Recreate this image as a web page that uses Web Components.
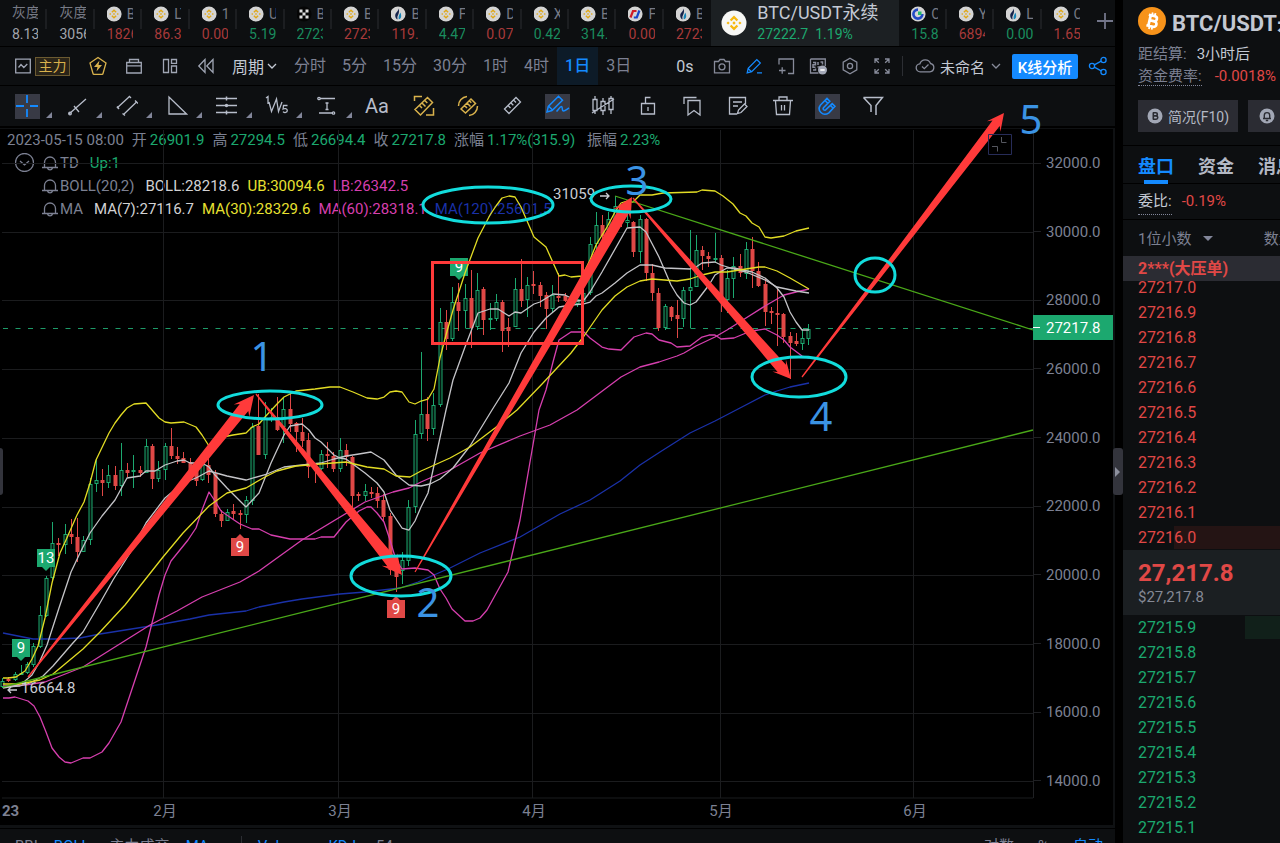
<!DOCTYPE html>
<html lang="zh-CN">
<head>
<meta charset="utf-8">
<title>BTC/USDT永续</title>
<style>
:root{
  --panel:#0d0f11;--line:#000;--muted:#7c8092;--text:#c3c9d4;--up:#1ca86f;--down:#e04846;--blue:#148aff;
  --gold:#d9b24c;--cell:#383a45;
}
html,body{height:100%}
body{margin:0;background:#000;color:var(--text);font-family:Roboto,"Noto Sans CJK SC",sans-serif;overflow:hidden}
</style>
</head>
<body>
<trade-app></trade-app>
<script>
const RESET = `*{box-sizing:border-box}
button,select,input{font:inherit;color:inherit;background:none;border:0;margin:0;padding:0;cursor:pointer}
table{border-collapse:collapse;border-spacing:0}h1,p,dl,dd,dt{margin:0;font-weight:inherit;font-size:inherit}`;

class BaseElement extends HTMLElement {
  constructor(){ super(); this.attachShadow({mode:'open'}); }
  connectedCallback(){
    this.shadowRoot.innerHTML = `<style>${RESET}${this.styles()}</style>${this.markup()}`;
    this.ready();
  }
  styles(){ return ''; }
  markup(){ return ''; }
  ready(){}
}

/* ---------- icons ---------- */
const ICONS = {
  binance:[16,`<circle cx="8" cy="8" r="7.6" fill="#d4d4d4"/><g fill="#e0a818"><path d="M8 3.2l2.6 2.6-1 1L8 5.200 6.400 6.800l-1-1z"/><path d="M8 12.800l2.600-2.600-1-1L8 10.800 6.400 9.200l-1 1z"/><path d="M4.200 7l1 1-1 1-1-1zM11.800 7l1 1-1 1-1-1zM8 6.900L9.100 8 8 9.100 6.900 8z"/></g>`],
  okx:[16,`<circle cx="8" cy="8" r="7.6" fill="#050505"/><path fill="#ddd" d="M3.500 3.500h3v3h-3zM9.500 3.500h3v3h-3zM6.500 6.500h3v3h-3zM3.500 9.500h3v3h-3zM9.500 9.500h3v3h-3z"/>`],
  htx:[16,`<circle cx="8" cy="8" r="7.6" fill="#d4d4d4"/><path fill="#14234b" d="M8.200 2.500c.5 3-3 4-3 7 0 2 1 3.500 2.300 4 .1-2-.6-2.500.6-4.600C9.400 6.500 9.300 4 8.200 2.500z"/><path fill="#1684b8" d="M10.300 6.500c-.4 2-2.200 3-1.500 6.800 1.500-.3 2.400-1.500 2.400-3.400 0-1.500-.3-2.600-.9-3.400z"/>`],
  gate:[16,`<circle cx="8" cy="8" r="7.6" fill="#d4d4d4"/><path fill="none" stroke="#2249c4" stroke-width="2.600" d="M8 3.600A4.500 4.500 0 1 0 12.400 8"/><path fill="#22b96f" d="M8 5.500h3.500V9H8z"/>`],
  bit:[16,`<circle cx="8" cy="8" r="7.6" fill="#d4d4d4"/><path fill="none" stroke="#d01c24" stroke-width="2.200" d="M3.500 11.500L6 5h3.500"/><path fill="none" stroke="#1846c8" stroke-width="2.200" d="M6.800 11.500h3L12.400 4.500"/>`],
  binanceLg:[26,`<circle cx="13" cy="13" r="12.500" fill="#f7f7f5"/><g fill="#f7b90e"><path d="M13 5.500l4.200 4.200-1.600 1.600L13 8.700l-2.600 2.600-1.600-1.600z"/><path d="M13 20.500l4.200-4.200-1.600-1.600L13 17.300l-2.600-2.600-1.600 1.600z"/><path d="M7.100 11.400L8.700 13l-1.600 1.600L5.500 13zM18.900 11.400l1.600 1.600-1.600 1.600-1.600-1.600zM13 11.300l1.700 1.700-1.700 1.700-1.700-1.700z"/></g>`],
  bitcoin:[28,`<circle cx="14" cy="14" r="14" fill="#f7931a"/><g transform="rotate(13 14 14)" fill="none" stroke="#fff" stroke-width="2.700"><path d="M9.500 8.600h6.200a2.600 2.600 0 0 1 0 5.200h-4M11.500 8.300v11.300M9.500 19.400h6.800a2.800 2.800 0 0 0 0-5.600h-4.600"/><path d="M12.800 5.500v3M15.600 5.500v3M12.800 19.500v3M15.600 19.500v3" stroke-width="1.800"/></g>`],
  wave:[18,`<path d="M1.700 2.200h14.600v13.600H1.700z"/><path d="M4.500 10.500l2.500-3 2.800 3 3.500-3.500"/>`],
  bolt:[20,`<path d="M10 1.500l8 5.500-3 10.500a1 1 0 0 1-1 .8H6a1 1 0 0 1-1-.8L2 7z"/><path fill="currentColor" stroke="none" d="M11.500 4.500L6 11h3.500l-1 4.500L14 9h-3.500z"/>`],
  brief:[18,`<path d="M1.700 5.500h14.600v10.500H1.700zM4.500 5.500V2.500h9v3M1.700 8.800h14.600"/>`],
  layout:[18,`<path d="M2.500 2.500h5v13h-5zM10.500 2.500h5v3.800h-5zM10.500 9h5v6.500h-5z"/>`],
  rewind:[18,`<path d="M8 2.500L1.800 9 8 15.500zM16 2.500L9.800 9l6.200 6.500z"/>`],
  down:[12,`<path d="M2 4l4 4 4-4"/>`],
  camera:[18,`<path d="M1.500 4.500h4l1.500-2h4l1.500 2h4v11.300h-15z"/><circle cx="9" cy="9.800" r="3"/>`],
  pencil:[18,`<path d="M2.200 15.800l1-4.600L11.800 2.600l3.500 3.500-8.600 8.600zM3 11.500l3.500 3.300M12 15.900h5"/>`],
  addbox:[18,`<path d="M2 7.500V2h14.500v14.500H11M2 13.500h6.500M5.200 10.200v6.500"/>`],
  qr:[18,`<path d="M1.500 2h14.800v7M1.500 2v14h8"/><path d="M4 5.500h2.500v2.300H4v2.400h2.500M9 5v3M11.500 5h2v2.500M4 13h2.500v-1.500M8.500 10h2v3" stroke-width="1.500"/><circle cx="13.500" cy="13" r="4.500" fill="#a4a9b8" stroke="none"/><path d="M11.300 13h4.400" stroke="#fff" stroke-width="1.600"/>`],
  hex:[18,`<path d="M9 1.200l6.800 4v7.600L9 16.800l-6.800-4V5.200z"/><circle cx="9" cy="9" r="2.600"/>`],
  full:[18,`<path d="M2 6V2h4M12 2h4v4M16 12v4h-4M6 16H2v-4M2.200 2.200l3.600 3.600M15.800 2.200l-3.600 3.600M15.800 15.800l-3.600-3.600M2.200 15.800l3.600-3.600"/>`],
  cloud:[20,`<path d="M5.500 15.800a4 4 0 0 1-.6-8A5.600 5.600 0 0 1 15.500 7.500a4.200 4.200 0 0 1-.6 8.300z"/><path d="M7 10.500l2.300 2.200 4.200-4.200"/>`],
  share:[20,`<circle cx="4" cy="10" r="2.600"/><circle cx="15.500" cy="4" r="2.600"/><circle cx="15.500" cy="16" r="2.600"/><path d="M6.300 8.800l6.900-3.600M6.300 11.200l6.900 3.600"/>`],
  cross:[24,`<path d="M12 1v8M12 15v8M1 12h8M15 12h8" stroke-width="1.800"/>`],
  trend:[22,`<path d="M3 19L20 4M8 11l5 6"/><circle cx="4" cy="18.500" r="1.300"/>`],
  channel:[22,`<path d="M1 13L13.500 1.500M7.500 19.500L20.500 7"/><path d="M1 11.500l2 2.500M13 1l2 2M6.500 18.500l2.500 2M19 5.500l3 3"/>`],
  triangle:[22,`<path d="M3 2v17h17.500z"/>`],
  levels:[22,`<path d="M0 3.500h21M0 10.500h21M0 17.500h21M10.500 1.500v4M10.500 15.500v4" stroke-width="1.500"/><circle cx="10.500" cy="10.500" r="1"/>`],
  waves:[26,`<path d="M2 5l2-1.500V11M5 9l2.500 9.500L12.500 6l2 12.500L18 9"/><path d="M23.500 12.500h-4l-.4 3.500c1.500-.8 4.200-.6 4.200 1.600 0 2-2.700 2.700-4.300 1"/>`],
  measure:[22,`<path d="M4 3.500h15M3 18h13M11 8v6.500M9.500 8h3M9.500 14.500h3"/><circle cx="3" cy="3.500" r="1.200"/><circle cx="17.500" cy="18" r="1.200"/>`],
  rulerA:[22,`<path d="M2 14.500L14.500 2.500l5 5L7.500 20zM6.500 10.500l2.500 2.500M9 8l3.500 3.500M11.800 5.500l2.500 2.500M1.500 6V1.500H9M20.500 13v7h-7.500" stroke-width="1.500"/>`],
  rulerB:[22,`<path d="M4 14L14 4l4.500 4.500L8.500 18zM7.500 10.500l2.500 2.500M10 8l3.500 3.500M12.300 5.800l2 2M1.500 11A9.500 9.500 0 0 1 10 1.500M20.500 11a9.500 9.500 0 0 1-8.500 9.500" stroke-width="1.500"/>`],
  ruler:[22,`<path d="M2.500 14L14 2.500l4.500 4.500L7 18.500zM6 10.500l2.500 2.500M8.800 7.700l2.500 2.500M11.500 5l2.500 2.500"/>`],
  draw:[26,`<path d="M2 19l1.300-5.500L13.500 3.300l4 4L7 17.500zM4 13.500l3.500 3.500M11.500 18.500c2-2 3.500-5 5-5s0 4.500 2 4.500 3-1.500 5.500-3" stroke-width="1.500"/>`],
  candles:[24,`<path d="M2 5.500h4v11H2zM4 2v3.500M4 16.500V20M10 7.500h4v9h-4zM12 4v3.500M12 16.500V21M18 4.500h4v11h-4zM20 2v2.500M20 15.500V20M1 19L23 5"/>`],
  lock:[22,`<path d="M4.500 8.500h13v10.500h-13zM8.500 8V2.500h5M11 12v4"/>`],
  marks:[22,`<path d="M2 9V2.500h12.500M6 5.500h12V20l-6-4.500L6 20z"/>`],
  note:[22,`<path d="M18.500 9V2.500h-16v16.500H10M6 7h9M6 11h5M10.500 18.500l1-3.500 6-6 2.500 2.500-6 6z"/>`],
  trash:[22,`<path d="M1 5.500h20M7 5V2h8v3M3.500 6l1 13.500h13L18.500 6M9.500 10v5.500M12.500 10v5.500"/>`],
  magnet:[22,`<path d="M3.500 10L10 3.500l2.800 2.800-6.300 6.400c-1 1.500.7 3.200 2.200 2.200l6.500-6.300 2.700 2.700-6 6.500c-6 4-12.400-2.300-8.400-7.800zM8 5.500l2.800 2.800M13.500 10.500l2.700 2.700" stroke-width="1.600"/>`],
  filter:[22,`<path d="M1.500 2.500h19l-6.500 8v9.500M1.500 2.500L9 10.500V17" stroke-width="1.500"/>`],
  bell:[18,`<path d="M1 13.500h16M3.500 13V8.500a5.500 5.500 0 0 1 11 0V13M6.500 14a2.600 2.600 0 0 0 5 0" stroke-width="1.300"/>`],
  badgeB:[16,`<circle cx="8" cy="8" r="7.500" fill="#a2a7b5" stroke="none"/><path stroke="#2b2c33" stroke-width="1.600" d="M5.800 4.800h3a1.500 1.500 0 0 1 0 3.100H6.300M5.800 11.200h3.300a1.600 1.600 0 0 0 0-3.300M6.300 4.800v6.400"/>`],
  badgeBell:[16,`<circle cx="8" cy="8" r="7.500" fill="#a2a7b5" stroke="none"/><path stroke="#2b2c33" stroke-width="1.400" d="M4 10.500h8M5.300 10V7.300a2.700 2.700 0 0 1 5.400 0V10M6.800 12.500h2.400"/>`],
  collapse:[19,`<circle cx="9.500" cy="9.500" r="9"/><path d="M5 8l4.500 4L14 8"/>`],
  plus:[18,`<path d="M9 1v16M1 9h16" stroke-width="1.800"/>`]
};
class UiIcon extends BaseElement {
  styles(){ return `:host{display:inline-flex;flex:none}svg{display:block;fill:none;stroke:currentColor;stroke-width:1.3}`; }
  markup(){
    const [n,body] = ICONS[this.getAttribute('name')];
    const s = this.getAttribute('size') || n;
    const brand = ['binance','okx','htx','gate','bit','binanceLg','bitcoin'].includes(this.getAttribute('name'));
    return `<svg width="${s}" height="${s}" viewBox="0 0 ${n} ${n}" aria-hidden="true" ${brand?'style="stroke:none"':''}>${body}</svg>`;
  }
}

/* ---------- ticker strip ---------- */
class TickerTab extends BaseElement {
  styles(){ return `
:host{display:block;flex:1 1 0;min-width:0;position:relative}
:host::after{content:"";position:absolute;right:0;top:9px;width:2px;height:20px;background:#1c1e21}
:host([last])::after{display:none}
button{display:block;width:100%;height:46px;padding:0 9px 0 12px;text-align:left;overflow:hidden}
.n,.v{display:flex;overflow:hidden;white-space:nowrap;align-items:center}
.n{height:21px;gap:5px;font-size:14px;color:#777a85;line-height:20px;padding-top:3px}
.n ui-icon{margin:0 0 0 -1px}
.plain{padding-top:0;line-height:21px}
.v{font-size:14px;line-height:20px;height:22px;color:#a2a5ac}
.g{color:#1a8c5e}.r{color:#a83a3a}`; }
  markup(){
    const i=this.getAttribute('icon');
    return `<button type="button"><span class="n ${i?'':'plain'}">${i?`<ui-icon name="${i}"></ui-icon>`:''}<slot></slot></span><span class="v ${this.getAttribute('dir')||''}">${this.getAttribute('value')}</span></button>`;
  }
}
class TickerActive extends BaseElement {
  styles(){ return `
:host{display:block;flex:0 0 188px;background:#1c2023}
button{display:flex;align-items:center;gap:10px;width:100%;height:46px;padding:0 0 0 10px;text-align:left;white-space:nowrap}
.t{display:block;font-size:18px;line-height:22px}
.v{display:flex;gap:7px;font-size:14px;line-height:20px;color:var(--up)}`; }
  markup(){ return `<button type="button"><ui-icon name="binanceLg"></ui-icon><span><span class="t">BTC/USDT永续</span><span class="v"><span>27222.7</span><span>1.19%</span></span></span></button>`; }
}
class TickerStrip extends BaseElement {
  styles(){ return `:host{display:flex;height:46px;background:var(--panel);flex:none}
.add{flex:0 0 26px;display:flex;align-items:center;justify-content:center;color:#73768a;padding:0 0 4px 6px}`; }
  markup(){
    const a=[['','灰度','8.13',''],['','灰度','30566',''],['binance','BTC','1826','r'],['binance','LTC','86.3','r'],['binance','1000','0.00','r'],['binance','UNI','5.19','g'],['okx','BTC','27232','g'],['binance','BTC','27232','r'],['htx','BTC','119.','r'],['binance','FIL','4.47','g'],['binance','DOGE','0.07','r'],['binance','XRP','0.42','g'],['binance','BNB','314.','g'],['bit','FIL','0.00','r'],['htx','BTC','27232','r']];
    const b=[['gate','CRV','15.8','g'],['binance','YFI','6894','r'],['htx','LUNA','0.00','g'],['binance','CFX','1.65','r']];
    const m=(t,last)=>`<ticker-tab ${last?'last':''} ${t[0]?`icon="${t[0]}"`:''} value="${t[2]}" dir="${t[3]}" >${t[1]}</ticker-tab>`;
    return a.map((t,i)=>m(t,i===14)).join('')+'<ticker-active></ticker-active>'+b.map((t,i)=>m(t,i===3)).join('')+'<button class="add" type="button" aria-label="添加"><ui-icon name="plus"></ui-icon></button>';
  }
}

/* ---------- period toolbar ---------- */
class PeriodBar extends BaseElement {
  styles(){ return `
:host{display:flex;align-items:center;justify-content:space-between;height:38px;background:var(--panel);color:var(--muted);font-size:16px;flex:none;white-space:nowrap}
div{display:flex;align-items:center}
button{display:flex;align-items:center;justify-content:center}
.i{color:#a0a6b5}
.main{margin:0 18px 0 3px;width:35px;height:19px;border:1px solid #6b5a31;background:#2a2418;color:var(--gold);font-size:14px;line-height:17px}
.gold{color:var(--gold)}
.lead{padding-left:14px}.lead .i{width:36px;height:38px}.lead .i.first{width:18px}
.set{margin-left:8px}
.cycle{color:var(--text);gap:2px;margin:0 8px 0 8px}
.p{padding:0 8px;height:38px;line-height:38px}
.on{background:#0d1b28;color:var(--blue);font-weight:500}
.tools .i{width:32px;height:38px;color:#878b9a}
.tools .blue{color:var(--blue)}
.sec{color:var(--text);width:42px}
.sep{width:1px;height:20px;background:#2c2e33;margin:0 12px 0 4px}
.name{gap:5px;color:var(--text);font-size:15px}.name ui-icon{color:#878b9a}
.k{margin:0 10px;width:66px;height:25px;border-radius:2px;background:var(--blue);color:#fff;font-size:15px;font-weight:500}
.share{color:var(--blue);margin-right:7px}`; }
  markup(){
    const periods=['分时','5分','15分','30分','1时','4时','1日','3日'];
    const btn=(n,l,c='')=>`<button type="button" class="i ${c}" aria-label="${l}"><ui-icon name="${n}"></ui-icon></button>`;
    return `<div class="lead">${btn('wave','指标','first')}<button type="button" class="main">主力</button>
<button type="button" class="gold" aria-label="闪电"><ui-icon name="bolt"></ui-icon></button><div class="set">${btn('brief','工具箱')}${btn('layout','布局')}${btn('rewind','回放')}</div>
<button type="button" class="cycle">周期<ui-icon name="down"></ui-icon></button>
${periods.map(p=>`<button type="button" class="p ${p==='1日'?'on':''}">${p}</button>`).join('')}</div>
<div class="tools"><button type="button" class="sec">0s</button>${btn('camera','截图')}${btn('pencil','画线','blue')}${btn('addbox','添加窗口')}${btn('qr','订单')}${btn('hex','设置')}${btn('full','全屏')}
<span class="sep"></span><button type="button" class="name"><ui-icon name="cloud"></ui-icon>未命名<ui-icon name="down"></ui-icon></button>
<button type="button" class="k">K线分析</button><button type="button" class="share" aria-label="分享"><ui-icon name="share"></ui-icon></button></div>`;
  }
}

/* ---------- drawing toolbar ---------- */
class DrawBar extends BaseElement {
  styles(){ return `
:host{display:flex;align-items:center;height:40px;background:var(--panel);color:#b7bdca;flex:none;padding-left:2px;margin:0}
button{position:relative;display:flex;align-items:center;justify-content:center;width:45px;height:40px;flex:none}
span{display:flex;align-items:center;justify-content:center}
.w{width:50px}
.w::after{content:"";position:absolute;right:0;bottom:8px;border:3px solid transparent;border-right-color:#82869a;border-bottom-color:#82869a}
.aa{width:50px;font-size:20px}
.aa+button{width:43px}
.on span{width:25px;height:25px;background:var(--cell);color:var(--blue)}
.gold{color:var(--gold)}`; }
  markup(){
    const w=[['cross','十字',1],['trend','线段'],['channel','通道'],['triangle','形状'],['levels','水平'],['waves','波浪'],['measure','测量']];
    const n=[['rulerA','量尺','gold'],['rulerB','画尺','gold'],['ruler','标尺'],['draw','画笔','on'],['candles','K线'],['lock','锁定'],['marks','书签'],['note','笔记'],['trash','删除'],['magnet','磁铁','on'],['filter','筛选']];
    return w.map(x=>`<button type="button" class="w ${x[2]?'on':''}" aria-label="${x[1]}"><span><ui-icon name="${x[0]}"></ui-icon></span></button>`).join('')
      +`<button type="button" class="aa">Aa</button>`
      +n.map(x=>`<button type="button" class="${x[2]||''}" aria-label="${x[1]}"><span><ui-icon name="${x[0]}"></ui-icon></span></button>`).join('');
  }
}

/* ---------- chart ---------- */
/* [high, low, body top, body bottom, rising] per day */
const CANDLES=`678 688 681 687 1|677 682 679 681 0|672 681 674 680 1|665 675 673 675 1|662 674 664 673 1|643 667 646 665 1|606 648 615 647 1|576 617 578 616 1|522 580 543 578 1|538 556 543 545 0|524 554 534 545 1|519 544 534 537 0|518 562 537 552 0|536 552 540 552 1|478 545 484 540 1|458 492 480 484 1|469 496 480 483 0|465 488 475 483 1|466 490 475 486 0|443 496 470 486 1|463 477 470 473 0|455 488 470 472 1|466 477 470 473 0|439 473 446 473 1|444 489 446 479 0|461 482 470 479 1|443 480 446 470 1|428 459 446 456 0|447 464 456 459 0|452 463 458 463 0|458 474 462 473 0|465 486 470 481 0|462 481 465 480 1|454 483 465 475 0|470 517 474 514 0|510 527 514 521 0|509 521 512 521 1|504 520 511 514 0|510 529 513 515 0|496 523 500 515 1|423 505 427 501 1|394 455 426 455 0|402 459 419 455 1|408 422 417 419 1|397 431 417 430 0|397 443 409 427 1|394 432 409 424 0|422 452 423 432 0|418 447 432 441 0|433 478 440 467 0|464 483 467 469 0|450 470 454 469 1|442 468 454 456 0|452 472 456 469 0|438 472 450 469 1|444 466 450 457 0|456 508 457 496 0|492 501 494 496 0|484 501 491 496 1|487 498 492 494 0|487 508 493 501 0|494 522 500 517 0|513 575 516 570 0|557 592 568 577 0|552 584 560 571 1|500 566 507 561 1|420 513 434 507 1|352 439 414 434 1|397 441 414 429 0|393 435 405 429 1|308 407 322 405 1|310 350 322 339 0|287 341 302 339 1|283 331 302 311 0|284 328 298 311 1|270 348 298 328 0|273 330 290 327 1|287 335 289 320 0|303 330 318 320 1|294 321 302 319 1|300 352 302 331 0|318 347 327 331 0|278 327 289 327 1|259 307 289 301 0|277 317 285 300 1|271 294 284 286 0|282 307 285 296 0|292 329 295 309 0|285 312 295 309 1|273 302 296 298 0|293 302 296 301 0|294 307 300 305 0|295 307 299 304 1|283 304 293 302 1|237 295 244 293 1|212 250 225 244 1|215 242 225 236 0|212 238 219 230 1|196 233 206 225 1|210 227 214 222 0|212 227 220 223 1|221 257 222 252 0|215 263 219 252 1|218 281 219 273 0|264 301 273 293 0|288 331 293 328 0|304 330 306 328 1|306 321 307 317 0|300 338 315 319 0|287 327 290 319 1|230 328 287 291 1|235 287 250 287 1|246 270 250 256 0|252 267 256 259 0|233 263 258 260 1|255 312 258 301 0|270 313 278 300 1|257 298 266 279 1|254 277 266 273 0|242 279 249 274 1|237 288 249 271 0|262 287 271 286 0|279 326 284 312 0|307 324 311 313 0|288 346 313 315 0|313 343 314 337 0|332 379 336 343 0|333 346 341 344 0|329 350 338 344 1|324 345 329 339 1`.split('|').map(s=>s.split(' ').map(Number));

const LINES=[
['#1a31a8','3,633 33,639 55,639 80,638 100,634 163,624 190,619 209,615 246,611 259,607 284,602 302,599 340,594 365,592 400,588 418,582 434,575 450,568 480,553 520,537 560,514 590,500 620,481 640,465 660,452 690,433 715,421 740,408 765,395 777,391 790,387 809,383'],
['#d63fae','3,686 25,685 45,682 83,667 150,625 177,611 202,597 240,582 259,571 302,540 365,502 393,492 409,488 421,482 430,478 450,470 480,453 520,436 550,425 577,410 621,377 640,367 659,362 677,356 684,353 696,346 715,337 727,330 746,318 765,306 784,295 796,292 809,289'],
['#d63fae','3,698 9,698 15,697 28,701 34,706 40,717 46,732 52,748 59,757 65,762 71,763 83,758 90,758 102,752 109,743 121,722 134,683 146,647 159,595 165,575 171,561 188,540 196,528 202,510 209,492 215,501 221,511 234,520 240,524 252,529 259,529 271,535 290,539 315,539 321,537 334,537 346,522 359,511 367,507 371,507 377,513 384,522 390,540 396,560 402,569 415,568 428,570 434,575 440,589 446,598 452,609 465,621 473,621 480,618 487,610 508,572 520,520 530,462 539,410 546,390 553,362 559,340 571,332 584,332 590,338 602,347 609,349 621,350 634,337 646,333 652,334 659,340 671,343 677,347 690,346 702,337 709,335 715,335 721,339 734,338 746,333 752,331 765,329 777,335 784,340 790,347 802,356 809,358'],
['#c4c4c8','3,687 20,686 30,683 43,676 53,666 72,644 83,632 100,603 113,580 130,553 146,523 165,498 183,483 196,478 209,471 227,476 246,480 267,474 284,467 302,465 321,463 334,459 346,456 359,454 371,452 384,460 396,475 409,485 421,486 430,484 440,479 453,468 470,446 492,410 509,383 521,353 534,332 546,318 559,307 571,305 583,304 590,302 596,296 602,293 615,283 627,273 640,265 652,265 665,268 690,269 696,267 702,263 715,262 721,265 734,269 746,272 765,280 777,287 796,291 809,293'],
['#c4c4c8','3,688 15,686 25,681 32,675 39,663 47,645 59,608 71,572 80,553 90,533 102,516 115,500 127,478 140,476 146,471 155,471 165,465 177,461 184,460 190,463 202,463 209,467 215,475 227,488 246,507 259,493 271,463 284,435 290,426 302,424 309,430 315,438 321,442 334,455 340,458 346,459 365,473 377,483 384,492 390,510 402,528 409,530 415,521 421,507 428,493 446,410 453,380 465,347 478,313 490,309 498,309 509,316 515,312 521,313 534,304 540,302 553,294 565,295 577,301 584,300 590,292 602,272 627,228 640,227 646,232 659,257 671,285 677,295 684,303 690,305 696,302 709,285 715,275 727,268 734,268 752,272 765,278 777,288 784,297 790,312 796,322 802,330 809,330'],
['#e2dc24','3,684 20,684 40,680 53,674 65,664 83,649 100,632 125,605 163,557 183,533 209,506 227,493 246,488 265,477 277,471 296,466 320,464 346,462 367,467 384,469 396,476 410,477 421,471 430,467 450,458 470,447 495,428 517,410 543,383 571,353 584,336 602,310 615,296 627,287 640,281 652,279 677,281 690,279 702,275 715,272 727,272 746,269 759,267 765,267 777,271 790,278 809,289'],
['#e2dc24','3,678 8,678 16,677 25,671 32,659 38,646 45,618 52,583 60,553 66,540 77,515 84,502 90,483 96,460 109,433 115,423 121,415 127,408 134,404 146,403 159,418 165,422 171,423 184,422 196,427 202,435 209,446 223,437 233,435 246,433 252,427 259,424 265,417 277,404 284,397 296,391 315,389 330,387 340,387 353,392 367,398 377,399 384,397 390,392 396,391 402,392 409,402 415,404 421,401 428,399 434,389 440,358 446,335 453,310 465,273 478,238 490,215 496,206 502,198 509,196 515,197 521,207 534,237 546,247 559,276 565,275 571,277 582,276 590,260 596,245 607,227 615,212 621,203 627,201 633,202 640,195 652,195 663,193 697,192 702,190 715,191 723,196 733,204 740,213 746,216 752,223 759,227 765,237 771,238 784,236 796,231 809,228'],
['#4aa818','3,687 1033,430'],['#4aa818','615,196 1033,330']];

function arrow(x1,y1,x2,y2,shaft,head,len){
  const L=Math.hypot(x2-x1,y2-y1),ux=(x2-x1)/L,uy=(y2-y1)/L,nx=-uy,ny=ux;
  const p=(d,o)=>`${(x1+ux*d+nx*o).toFixed(1)},${(y1+uy*d+ny*o).toFixed(1)}`;
  return `<polygon points="${[p(0,.6),p(L-len+4,shaft/2),p(L-len,head/2),p(L,0),p(L-len,-head/2),p(L-len+4,-shaft/2),p(0,-.6)].join(' ')}"/>`;
}

class ChartCanvas extends BaseElement {
  styles(){ return `
:host{display:block;flex:1 1 0;min-width:0;height:696px;position:relative}
svg{display:block;position:relative;width:100%;height:696px;overflow:visible;z-index:2;pointer-events:none;font-size:15px}`; }
  markup(){
    let s='<g stroke="#1b1c1e">';
    for(let k=0;k<10;k++){const y=Math.round(163+68.7*k)+.5;s+=`<line x1="2" x2="100%" y1="${y}" y2="${y}"/>`;}
    for(const x of [164,339,533,721,914]) s+=`<line x1="${x-.5}" x2="${x-.5}" y1="130" y2="798"/>`;
    s+='<line x1="2" x2="100%" y1="798" y2="798"/></g>';
    s+='<line x1="3" x2="100%" y1="328.500" y2="328.500" stroke="#1d9a68" stroke-dasharray="5 7.500"/>';
    CANDLES.forEach(([h,l,t,b,up],i)=>{
      const x=Math.floor(2.5+6.25*i)+.5,c=up?'#1ca86f':'#e04846';
      if(up){ s+=`<line x1="${x}" x2="${x}" y1="${h}" y2="${l}" stroke="${c}"/><rect x="${x-1.5}" y="${t+.5}" width="3" height="${Math.max(b-t-1,1)}" fill="#04170f" stroke="${c}"/>`; }
      else s+=`<line x1="${x}" x2="${x}" y1="${h}" y2="${l}" stroke="${c}"/><rect x="${x-2}" y="${t}" width="4" height="${Math.max(b-t,1)}" fill="${c}"/>`;
    });
    const tag=(x,y,t,c,dir)=>`<rect x="${x-9}" y="${y-9}" width="18" height="18" fill="${c}"/><path d="M${x-4} ${y+9*dir}h8l-4 ${4*dir}z" fill="${c}"/><text x="${x}" y="${y+5}" fill="#fff" text-anchor="middle" font-size="15">${t}</text>`;
    s+=tag(21,648,'9','#1ca86f',1)+tag(46,558,'13','#1ca86f',1)+tag(459,267,'9','#1ca86f',1)+tag(240,547,'9','#e04846',-1)+tag(396,609,'9','#e04846',-1);
    s+='<g fill="none" stroke-width="1.300" stroke-linejoin="round">'+LINES.map(([c,p])=>`<polyline points="${p}" stroke="${c}"/>`).join('')+'</g>';
    s+='<g fill="#c9ccd3"><text x="553" y="199">31059</text><text x="21" y="693">16664.8</text></g><path d="M600 196h9M606 193l3 3-3 3M17 690H8M11 687l-3 3 3 3" fill="none" stroke="#c9ccd3" stroke-width="1.300"/>';
    s+='<g fill="#ff3a3a">'+arrow(28,677,254,395,11,20,20)+arrow(256,394,402,575,12,20,20)+arrow(415,572,632,197,11,20,20)+arrow(633,198,791,379,11,18,18)+arrow(802,377,1004,113,9,17,17)+'</g>';
    s+='<rect x="432.500" y="262.500" width="150" height="81" fill="none" stroke="#ff3a3a" stroke-width="3"/>';
    s+='<g fill="none" stroke="#12dcdc" stroke-width="3">'+[[270,405,52,14],[401,576,50,20],[488,205,65,18],[631,199,40,13],[799,377,47,20],[875,275,20,17]].map(e=>`<ellipse cx="${e[0]}" cy="${e[1]}" rx="${e[2]}" ry="${e[3]}"/>`).join('')+'</g>';
    s+='<g fill="#3b93e4" font-size="40" font-family="Noto Sans,sans-serif" text-anchor="middle">'+[['1',262,371],['2',428,617],['3',637,195],['4',821,431],['5',1031,134]].map(a=>`<text x="${a[1]}" y="${a[2]}">${a[0]}</text>`).join('')+'</g>';
    s+='<g fill="#7c8092"><text x="2" y="816" font-weight="700">23</text>'+[['2月',165],['3月',340],['4月',534],['5月',721],['6月',915]].map(a=>`<text x="${a[1]}" y="816" text-anchor="middle">${a[0]}</text>`).join('')+'</g>';
    s+='<path d="M988.500 134.500h23v20h-23z" fill="none" stroke="#272c58"/><path d="M1001.500 137v5.500h5M992 146.500h5.500v5" fill="none" stroke="#55575f"/>';
    return `<chart-legend></chart-legend><svg role="img" aria-label="K线图"><g transform="translate(0,-129)">${s}</g></svg>`;
  }
}

class ChartLegend extends BaseElement {
  styles(){ return `
:host{display:block;position:absolute;left:0;top:0;z-index:1;color:var(--muted);font-size:15px;line-height:22px;white-space:nowrap}
.bar,.row{display:flex;align-items:center}
.bar{gap:8px;padding-left:7px}.bar span{display:flex;gap:3px}
b{font-weight:400;color:var(--up)}
.row{padding-left:41px;gap:8px;height:23px}
.row.td{padding-left:15px;height:23px}
.name{display:flex;align-items:center;gap:1px;margin-right:3px}
.row button{display:flex;margin-right:-1px}
.w{color:#d2d2d4}.y{color:#e8e130}.m{color:#d63fae}.b{color:#1a31a8}`; }
  markup(){
    const n=t=>`<span class="name"><ui-icon name="bell"></ui-icon>${t}</span>`;
    return `<div class="bar"><time>2023-05-15 08:00</time><span>开<b>26901.9</b></span><span>高<b>27294.5</b></span><span>低<b>26694.4</b></span><span>收<b>27217.8</b></span><span>涨幅<b>1.17%(315.9)</b></span><span>&nbsp;振幅<b>2.23%</b></span></div>
<div class="row td"><button type="button" aria-label="折叠"><ui-icon name="collapse"></ui-icon></button>${n('TD')}<b>Up:1</b></div>
<div class="row">${n('BOLL(20,2)')}<span class="w">BOLL:28218.6</span><span class="y">UB:30094.6</span><span class="m">LB:26342.5</span></div>
<div class="row">${n('MA')}<span class="w">MA(7):27116.7</span><span class="y">MA(30):28329.6</span><span class="m">MA(60):28318.1</span><span class="b">MA(120):25601.5</span></div>`;
  }
}

class PriceAxis extends BaseElement {
  styles(){ return `
:host{display:block;flex:0 0 80px;position:relative;border-left:1px solid #1f2023;height:669px;color:var(--muted);font-size:15px}
ul{margin:0;padding:25px 0 8px;list-style:none;height:669px;display:flex;flex-direction:column;justify-content:space-between}
li{display:flex;align-items:center;gap:5px;line-height:18px;height:18px}
li::before{content:"";width:7px;height:1px;background:#1f2023}
output{position:absolute;left:-1px;right:0;top:186px;height:25px;background:var(--up);color:#fff;display:flex;align-items:center;gap:6px}
output::before{content:"";width:7px;height:1px;background:#fff}`; }
  markup(){ return `<ul>${[32,30,28,26,24,22,20,18,16,14].map(n=>`<li>${n}000.0</li>`).join('')}</ul><output>27217.8</output>`; }
}

class IndicatorBar extends BaseElement {
  styles(){ return `
:host{display:flex;justify-content:space-between;flex:none;height:36px;padding:7px 12px 0 15px;background:var(--panel);border-top:1px solid #000;font-size:15px;line-height:20px;color:var(--muted);white-space:nowrap}
div{display:flex;align-items:flex-start;gap:16px}.b{color:var(--blue)}
button{line-height:20px}
i{width:1px;height:20px;background:#2c2e33;margin:0 0 0 16px}
.r{gap:24px}.k{margin-left:4px}`; }
  markup(){ return `<div><button type="button">BBI</button><button type="button" class="b">BOLL</button><button type="button" class="k">主力成交</button><button type="button" class="b">MA</button><i></i><button type="button" class="b">Volume</button><button type="button" class="b k">KDJ</button><button type="button" class="k">54</button></div>
<div class="r"><button type="button">对数</button><button type="button">%</button><button type="button" class="b">自动</button></div>`; }
}

class ChartPanel extends BaseElement {
  styles(){ return `
:host{display:flex;position:relative;background:#000;border:2px solid #0f1113;border-width:1px 2px 3px 0;flex:none;height:700px}
.edge{position:absolute;left:0;top:319px;width:3px;height:47px;background:#33343c;border-radius:0 3px 3px 0}`; }
  markup(){ return `<chart-canvas></chart-canvas><price-axis></price-axis><span class="edge"></span>`; }
}

/* ---------- order book ---------- */
class MarketPanel extends BaseElement {
  styles(){ return `
:host{display:block;flex:0 0 157px;min-width:0;overflow:hidden;background:var(--panel);white-space:nowrap}
:host>*{padding-left:15px}
.head{display:flex;align-items:center;gap:6px;height:40px;font-size:22px;font-weight:700;color:#c3c8d2;padding-top:1px}
.kv{display:flex;align-items:center;gap:10px;height:24px;font-size:15px;color:var(--muted)}
.kv dd{color:var(--text)}.kv .red{color:var(--down)}
.rate{gap:13px}
dt.u{border-bottom:1px dotted #82869a;line-height:18px}
.btns{display:flex;gap:10px;padding-top:12px;height:57px}
.btns button{flex:none;display:flex;align-items:center;justify-content:center;gap:5px;width:100px;height:32px;background:#2b2c33;font-size:14px;color:#b3b8c4}
.btns button+button{justify-content:flex-start;padding-left:11px}
nav{display:flex;gap:24px;height:39px;border-top:1px solid #000;border-bottom:1px solid #000;font-size:18px;font-weight:700;color:#b3b8c4}
nav button{position:relative;height:38px;font-weight:700}
nav .on{color:var(--blue)}nav .on::after{content:"";position:absolute;left:6px;right:6px;bottom:0;height:4px;background:var(--blue)}
.ratio{height:36px;border-bottom:1px solid #000;padding-bottom:2px}
.ratio dt{color:var(--text);border-color:#82869a;padding-bottom:2px;line-height:22px;margin-top:4px}
.filter{display:flex;align-items:center;justify-content:space-between;height:36px;font-size:15px;line-height:20px;color:var(--muted);width:196px;padding-top:1px}
.filter label{display:flex;align-items:center;gap:5px}
select{appearance:none;width:60px}
.tri{border:5px solid transparent;border-top-color:#82869a;border-bottom:0}
.big{height:25px;line-height:25px;background:#2b2c33;color:var(--down);font-size:16px;font-weight:700;position:relative}
table{width:100%;font-size:16px;margin-top:-6px}
table.bids{margin-top:0}
:host>table{padding:0}
td{padding:0 0 0 15px;height:25px;line-height:24px}
.asks td{color:var(--down)}.bids td{color:var(--up)}
.asks tr:last-child td{background:linear-gradient(#241414,#241414) 51px 1px/200px 23px no-repeat}
.bids tr:first-child td{background:linear-gradient(#11201a,#11201a) 122px 1px/200px 23px no-repeat}
.last{background:#1b1f22;height:65px;padding-top:9px}
.last strong{display:block;font-size:24px;line-height:28px;color:var(--down);font-weight:700}
.last span{display:block;font-size:15px;line-height:20px;color:#858995}`; }
  markup(){
    const rows=a=>a.map(v=>`<tr><td>${v}</td></tr>`).join('');
    return `<h1 class="head"><ui-icon name="bitcoin"></ui-icon>BTC/USDT永续</h1>
<dl class="kv"><dt>距结算:</dt><dd>3小时后</dd></dl>
<dl class="kv rate"><dt class="u">资金费率:</dt><dd class="red">-0.0018%</dd></dl>
<div class="btns"><button type="button"><ui-icon name="badgeB"></ui-icon>简况(F10)</button><button type="button"><ui-icon name="badgeBell"></ui-icon>预警</button></div>
<nav><button type="button" class="on">盘口</button><button type="button">资金</button><button type="button">消息</button></nav>
<dl class="kv ratio"><dt class="u">委比:</dt><dd class="red">-0.19%</dd></dl>
<div class="filter"><label><select aria-label="小数位"><option>1位小数</option></select><span class="tri"></span></label><span>数量(张)</span></div>
<div class="big">2***(大压单)</div>
<table class="asks">${rows(['27217.0','27216.9','27216.8','27216.7','27216.6','27216.5','27216.4','27216.3','27216.2','27216.1','27216.0'])}</table>
<div class="last"><strong>27,217.8</strong><span>$27,217.8</span></div>
<table class="bids">${rows(['27215.9','27215.8','27215.7','27215.6','27215.5','27215.4','27215.3','27215.2','27215.1'])}</table>`;
  }
}

class TradeApp extends BaseElement {
  styles(){ return `
:host{display:flex;height:100vh;overflow:hidden;background:#000}
main{flex:1 1 0;min-width:0;display:flex;flex-direction:column}
.bars{display:flex;flex-direction:column;gap:1px;padding-bottom:2px;flex:none}
.gutter{flex:0 0 8px;position:relative}
.gutter button{position:absolute;left:-2px;top:448px;width:10px;height:47px;background:#33343c;border-radius:3px}
.gutter button::after{content:"";position:absolute;left:2px;top:19px;border:5px solid transparent;border-left-color:#8d909e;border-right:0}`; }
  markup(){ return `<main><div class="bars"><ticker-strip></ticker-strip><period-bar></period-bar><draw-bar></draw-bar></div><chart-panel></chart-panel><indicator-bar></indicator-bar></main><div class="gutter"><button type="button" aria-label="收起"></button></div><market-panel></market-panel>`; }
}

const defs={'ui-icon':UiIcon,'ticker-tab':TickerTab,'ticker-active':TickerActive,'ticker-strip':TickerStrip,'period-bar':PeriodBar,'draw-bar':DrawBar,'chart-legend':ChartLegend,'chart-canvas':ChartCanvas,'price-axis':PriceAxis,'indicator-bar':IndicatorBar,'chart-panel':ChartPanel,'market-panel':MarketPanel,'trade-app':TradeApp};
for(const [n,c] of Object.entries(defs)) customElements.define(n,c);
</script>
</body>
</html>
